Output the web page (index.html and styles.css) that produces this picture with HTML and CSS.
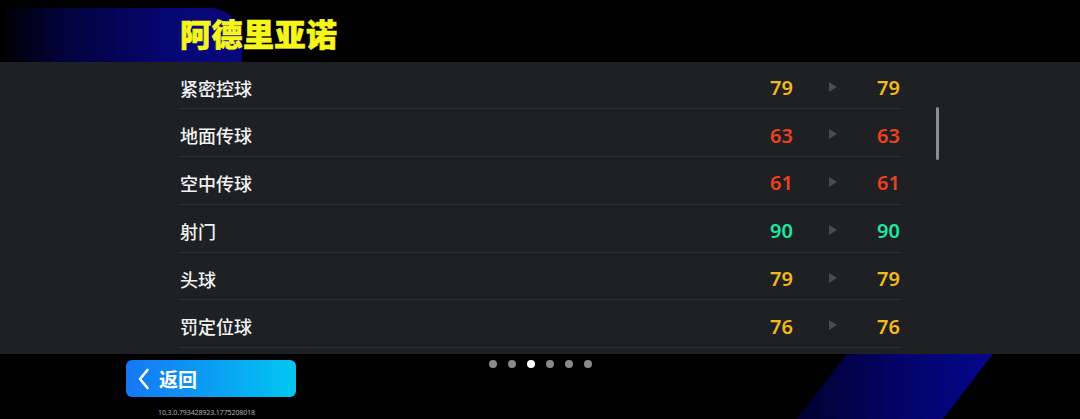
FILE: index.html
```html
<!DOCTYPE html>
<html lang="zh-CN">

<head>
  <meta charset="UTF-8">
  <title>球员能力</title>
  <link rel="stylesheet" href="styles.css">
</head>

<body>
  <div class="screen">
    <div class="header">
      <h1>阿德里亚诺</h1>
    </div>

    <div class="panel">
      <div class="list">
        <div class="row">
          <span class="name">紧密控球</span>
          <span class="val yellow">79</span>
          <span class="arrow"></span>
          <span class="val yellow">79</span>
        </div>
        <div class="row">
          <span class="name">地面传球</span>
          <span class="val red">63</span>
          <span class="arrow"></span>
          <span class="val red">63</span>
        </div>
        <div class="row">
          <span class="name">空中传球</span>
          <span class="val red">61</span>
          <span class="arrow"></span>
          <span class="val red">61</span>
        </div>
        <div class="row">
          <span class="name">射门</span>
          <span class="val green">90</span>
          <span class="arrow"></span>
          <span class="val green">90</span>
        </div>
        <div class="row">
          <span class="name">头球</span>
          <span class="val yellow">79</span>
          <span class="arrow"></span>
          <span class="val yellow">79</span>
        </div>
        <div class="row">
          <span class="name">罚定位球</span>
          <span class="val yellow">76</span>
          <span class="arrow"></span>
          <span class="val yellow">76</span>
        </div>
      </div>
      <div class="scrollbar"></div>
    </div>

    <div class="footer">
      <div class="left">
        <button class="back">
          <svg width="13" height="22" viewBox="0 0 13 22">
            <path d="M10.5 2 L3 11 L10.5 20" fill="none" stroke="#fff" stroke-width="2.6" stroke-linecap="round" stroke-linejoin="round" />
          </svg>
          <span>返回</span>
        </button>
        <div class="version">10.3.0.793428923.1775208018</div>
      </div>
      <div class="dots">
        <i></i><i></i><i class="on"></i><i></i><i></i><i></i>
      </div>
      <div></div>
    </div>

    <div class="stripe"></div>
  </div>
</body>

</html>
```

FILE: styles.css
```css
html,
body {
  margin: 0;
  padding: 0;
  background: #000;
  overflow: hidden;
}

.screen {
  position: relative;
  width: 1080px;
  height: 419px;
  font-family: "Noto Sans", "Noto Sans CJK SC", sans-serif;
  color: #fff;
}

.header {
  position: relative;
  height: 62px;
  padding-left: 180px;
  box-sizing: border-box;
}

/* blue glow behind the name */
.header::before {
  content: "";
  position: absolute;
  left: 0;
  top: 8px;
  width: 242px;
  height: 56px;
  border-radius: 0 32px 0 0;
  background: linear-gradient(90deg, #000 0%, #02023a 25%, #060673 70%, #08087e 100%);
}

.header h1 {
  position: relative;
  margin: 0;
  padding-top: 14px;
  font-size: 31px;
  line-height: 40px;
  font-weight: 900;
  color: #f6f61c;
  letter-spacing: 0.5px;
  -webkit-text-stroke: 0.6px #f6f61c;
}

.panel {
  position: relative;
  height: 292px;
  background: #1f2024;
  overflow: hidden;
}

.list {
  width: 720px;
  margin-left: 180px;
}

.row {
  display: grid;
  grid-template-columns: 1fr 60px 80px 27px;
  align-items: center;
  height: 47.8px;
  box-sizing: border-box;
  padding-top: 5px;
  border-bottom: 1px solid #2d2e33;
}

.row:first-child {
  height: 47.3px;
}

.name {
  font-size: 18px;
  font-weight: 500;
  color: #f2f2f2;
}

.val {
  text-align: right;
  font-size: 20px;
  font-weight: 600;
}

.yellow {
  color: #f2b91c;
}

.red {
  color: #ec4120;
}

.green {
  color: #1de6a2;
}

.arrow {
  justify-self: center;
  width: 0;
  height: 0;
  margin-top: -2px;
  border-top: 5px solid transparent;
  border-bottom: 5px solid transparent;
  border-left: 8px solid #4a4b51;
}

.scrollbar {
  position: absolute;
  left: 936px;
  top: 45px;
  width: 3px;
  height: 53px;
  border-radius: 2px;
  background: #8c8d92;
}

.footer {
  position: relative;
  z-index: 1;
  display: grid;
  grid-template-columns: 1fr auto 1fr;
}

.left {
  padding-left: 126px;
  padding-top: 6px;
}

.back {
  display: flex;
  align-items: center;
  gap: 9px;
  width: 170px;
  height: 37px;
  padding: 0 0 0 11px;
  border: none;
  border-radius: 6px;
  background: linear-gradient(90deg, #1577f4 0%, #0aa6f2 60%, #02c6f0 100%);
  color: #fff;
  font-family: "Noto Sans CJK SC", sans-serif;
  font-size: 19px;
  font-weight: 700;
}

.version {
  margin-top: 12px;
  padding-left: 32px;
  font-size: 7px;
  line-height: 8px;
  color: #b0b0b0;
  letter-spacing: -0.1px;
}

.dots {
  display: flex;
  gap: 11px;
  padding-top: 6px;
}

.dots i {
  width: 8px;
  height: 8px;
  border-radius: 50%;
  background: #8a8a8a;
}

.dots i.on {
  background: #fff;
}

/* diagonal blue band in the corner */
.stripe {
  position: absolute;
  left: 797px;
  top: 354px;
  width: 196px;
  height: 65px;
  clip-path: polygon(50px 0, 196px 0, 146px 65px, 0 65px);
  background: linear-gradient(90deg, #01012e 0%, #030366 50%, #06068c 100%);
}
```
